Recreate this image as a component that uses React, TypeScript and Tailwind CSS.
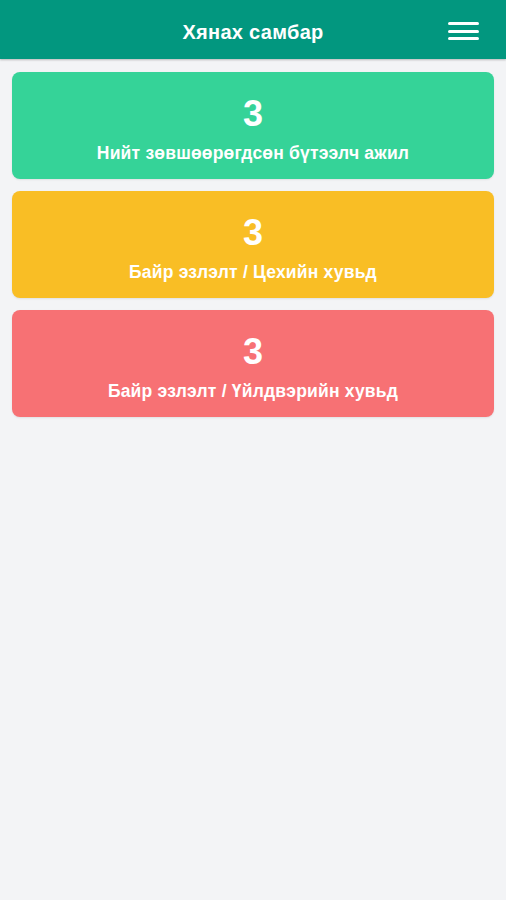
import React from 'react'

interface StatCard {
  value: number
  label: string
  color: string
}

const cards: StatCard[] = [
  { value: 3, label: 'Нийт зөвшөөрөгдсөн бүтээлч ажил', color: 'bg-[#35d398]' },
  { value: 3, label: 'Байр эзлэлт / Цехийн хувьд', color: 'bg-[#f9be25]' },
  { value: 3, label: 'Байр эзлэлт / Үйлдвэрийн хувьд', color: 'bg-[#f77174]' }
]

const App: React.FC = () => {
  return (
    <div className="min-h-[900px] bg-[#f3f4f6] font-['Liberation_Sans',Arial,sans-serif]">
      {/* header */}
      <div className="relative h-[59px] bg-[#02977f] flex items-center justify-center pt-[5px] shadow-[0_1px_2px_rgba(0,0,0,0.25)]">
        <h1 className="text-white text-[20px] font-semibold tracking-[0.3px]">Хянах самбар</h1>
        <button className="absolute right-[27px] top-[22px] flex flex-col gap-[4.5px]">
          <span className="block w-[31px] h-[3px] bg-white rounded-sm" />
          <span className="block w-[31px] h-[3px] bg-white rounded-sm" />
          <span className="block w-[31px] h-[3px] bg-white rounded-sm" />
        </button>
      </div>

      {/* cards */}
      <div className="flex flex-col gap-3 px-3 pt-[13px]">
        {cards.map((card, i) => (
          <div
            key={i}
            className={`${card.color} h-[107px] rounded-lg flex flex-col items-center justify-center pt-[12px] text-white shadow-[0_1px_2px_rgba(0,0,0,0.08)]`}
          >
            <div className="text-[36px] leading-none font-bold">{card.value}</div>
            <div className="text-[17.5px] font-bold mt-[8px] tracking-[0.2px]">{card.label}</div>
          </div>
        ))}
      </div>
    </div>
  )
}

export default App
